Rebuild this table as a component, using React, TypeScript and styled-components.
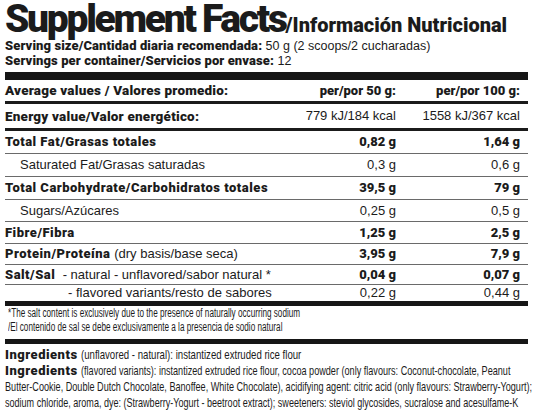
import React from 'react';
import styled, { createGlobalStyle } from 'styled-components';

const GlobalStyle = createGlobalStyle`
  html, body {
    margin: 0;
    padding: 0;
    background: #ffffff;
  }
`;

const HEAVY = "'Roboto', 'Liberation Sans', Arial, sans-serif";
const PLAIN = "'Liberation Sans', Arial, sans-serif";

const Page = styled.div`
  width: 536px;
  height: 411px;
  overflow: hidden;
  padding: 0 8px 0 5px;
  box-sizing: border-box;
  color: #1b1b1b;
  font-family: ${PLAIN};
  font-size: 13px;
`;

const TitleLine = styled.div`
  display: flex;
  align-items: baseline;
  height: 38px;
  line-height: 38px;
  white-space: nowrap;
`;

const Title = styled.span`
  font-family: ${HEAVY};
  font-weight: 900;
  font-size: 39px;
  letter-spacing: -2.3px;
`;

const Subtitle = styled.span`
  font-family: ${HEAVY};
  font-weight: 900;
  font-size: 20px;
  letter-spacing: 0;
`;

const InfoLine = styled.div`
  height: 15px;
  line-height: 15px;
  font-size: 12.5px;
  white-space: nowrap;
`;

const InfoLabel = styled.span`
  font-family: ${HEAVY};
  font-weight: 900;
  font-size: 13px;
  letter-spacing: 0.1px;
`;

const Bar = styled.div<{ $h: number; $mt?: number }>`
  height: ${p => p.$h}px;
  margin-top: ${p => p.$mt ?? 0}px;
  background: #161616;
`;

const Table = styled.div`
  display: grid;
  grid-template-columns: 1fr 120px 124px;
`;

type Line = 'thick' | 'thin' | 'none';
type Weight = 'head' | 'bold' | 'plain';

const Cell = styled.div<{ $line: Line; $h: number; $weight: Weight; $right?: boolean; $indent?: number }>`
  height: ${p => p.$h}px;
  line-height: ${p => p.$h}px;
  border-bottom: ${p => (p.$line === 'thick' ? '3px solid #1b1b1b' : p.$line === 'thin' ? '1px solid #6a6a6a' : 'none')};
  font-family: ${p => (p.$weight === 'plain' ? PLAIN : HEAVY)};
  font-weight: ${p => (p.$weight === 'plain' ? 400 : 900)};
  font-size: ${p => (p.$weight === 'head' ? 13.5 : 13)}px;
  letter-spacing: ${p => (p.$weight === 'head' ? 0.2 : p.$weight === 'bold' ? 0.5 : 0)}px;
  text-align: ${p => (p.$right ? 'right' : 'left')};
  padding-left: ${p => p.$indent ?? 0}px;
  padding-right: ${p => (p.$right ? 8 : 0)}px;
  white-space: nowrap;
`;

const ValueCell = styled(Cell)`
  letter-spacing: 0;
  font-size: 13px;
`;

const Normal = styled.span`
  font-family: ${PLAIN};
  font-weight: 400;
  letter-spacing: 0;
`;

const Footnote = styled.div`
  padding: 0 0 5px 3px;
`;

const Ingredients = styled.div`
  padding-top: 3px;
`;

const CondLine = styled.div<{ $size: number; $lh: number }>`
  height: ${p => p.$lh}px;
  line-height: ${p => p.$lh}px;
  font-size: ${p => p.$size}px;
  white-space: nowrap;
  display: flex;
  align-items: baseline;
`;

// condensed text: the installed sans is squeezed horizontally to match the narrow face
const Cond = styled.span<{ $scale: number }>`
  display: inline-block;
  flex-shrink: 0;
  font-family: ${PLAIN};
  transform: scaleX(${p => p.$scale});
  transform-origin: left center;
`;

const IngHead = styled.span`
  flex-shrink: 0;
  font-family: ${HEAVY};
  font-weight: 900;
  font-size: 13px;
  letter-spacing: 0.5px;
  margin-right: 3px;
`;

interface Row {
  label: React.ReactNode;
  a: string;
  b: string;
  weight: Weight;
  valWeight: Weight;
  indent?: number;
  line: Line;
  h: number;
}

const rows: Row[] = [
  { label: 'Average values / Valores promedio:', a: 'per/por 50 g:', b: 'per/por 100 g:', weight: 'head', valWeight: 'bold', line: 'thick', h: 21 },
  { label: 'Energy value/Valor energético:', a: '779 kJ/184 kcal', b: '1558 kJ/367 kcal', weight: 'head', valWeight: 'plain', line: 'thick', h: 24 },
  { label: 'Total Fat/Grasas totales', a: '0,82 g', b: '1,64 g', weight: 'bold', valWeight: 'bold', line: 'thin', h: 22 },
  { label: 'Saturated Fat/Grasas saturadas', a: '0,3 g', b: '0,6 g', weight: 'plain', valWeight: 'plain', indent: 15, line: 'thin', h: 22 },
  { label: 'Total Carbohydrate/Carbohidratos totales', a: '39,5 g', b: '79 g', weight: 'bold', valWeight: 'bold', line: 'thin', h: 22 },
  { label: 'Sugars/Azúcares', a: '0,25 g', b: '0,5 g', weight: 'plain', valWeight: 'plain', indent: 15, line: 'thin', h: 21 },
  { label: 'Fibre/Fibra', a: '1,25 g', b: '2,5 g', weight: 'bold', valWeight: 'bold', line: 'thin', h: 21 },
  { label: <>Protein/Proteína <Normal>(dry basis/base seca)</Normal></>, a: '3,95 g', b: '7,9 g', weight: 'bold', valWeight: 'bold', line: 'thin', h: 20 },
  { label: <>Salt/Sal <Normal>&nbsp;- natural - unflavored/sabor natural *</Normal></>, a: '0,04 g', b: '0,07 g', weight: 'bold', valWeight: 'bold', line: 'thin', h: 19 },
  { label: '- flavored variants/resto de sabores', a: '0,22 g', b: '0,44 g', weight: 'plain', valWeight: 'plain', indent: 63, line: 'none', h: 16 },
];

const App: React.FC = () => {
  return (
    <Page>
      <GlobalStyle />
      <TitleLine>
        <Title>Supplement Facts</Title>
        <Subtitle>/Información Nutricional</Subtitle>
      </TitleLine>
      <InfoLine>
        <InfoLabel>Serving size/Cantidad diaria recomendada:</InfoLabel> 50 g (2 scoops/2 cucharadas)
      </InfoLine>
      <InfoLine>
        <InfoLabel>Servings per container/Servicios por envase:</InfoLabel> 12
      </InfoLine>
      <Bar $h={8} $mt={4} />
      <Table>
        {rows.map((r, i) => (
          <React.Fragment key={i}>
            <Cell $line={r.line} $h={r.h} $weight={r.weight} $indent={r.indent}>{r.label}</Cell>
            <ValueCell $line={r.line} $h={r.h} $weight={r.valWeight} $right>{r.a}</ValueCell>
            <ValueCell $line={r.line} $h={r.h} $weight={r.valWeight} $right>{r.b}</ValueCell>
          </React.Fragment>
        ))}
      </Table>
      <Bar $h={5} />
      <Footnote>
        <CondLine $size={12} $lh={14}>
          <Cond $scale={0.68}>*The salt content is exclusively due to the presence of naturally occurring sodium</Cond>
        </CondLine>
        <CondLine $size={12} $lh={14}>
          <Cond $scale={0.68}>/El contenido de sal se debe exclusivamente a la presencia de sodio natural</Cond>
        </CondLine>
      </Footnote>
      <Bar $h={5} />
      <Ingredients>
        <CondLine $size={13} $lh={16}>
          <IngHead>Ingredients</IngHead>
          <Cond $scale={0.74}>(unflavored - natural): instantized extruded rice flour</Cond>
        </CondLine>
        <CondLine $size={13} $lh={16}>
          <IngHead>Ingredients</IngHead>
          <Cond $scale={0.7}>(flavored variants): instantized extruded rice flour, cocoa powder (only flavours: Coconut-chocolate, Peanut</Cond>
        </CondLine>
        <CondLine $size={13} $lh={16}>
          <Cond $scale={0.7}>Butter-Cookie, Double Dutch Chocolate, Banoffee, White Chocolate), acidifying agent: citric acid (only flavours: Strawberry-Yogurt);</Cond>
        </CondLine>
        <CondLine $size={13} $lh={16}>
          <Cond $scale={0.695}>sodium chloride, aroma, dye: (Strawberry-Yogurt - beetroot extract); sweeteners: steviol glycosides, sucralose and acesulfame-K</Cond>
        </CondLine>
      </Ingredients>
    </Page>
  );
};

export default App;
